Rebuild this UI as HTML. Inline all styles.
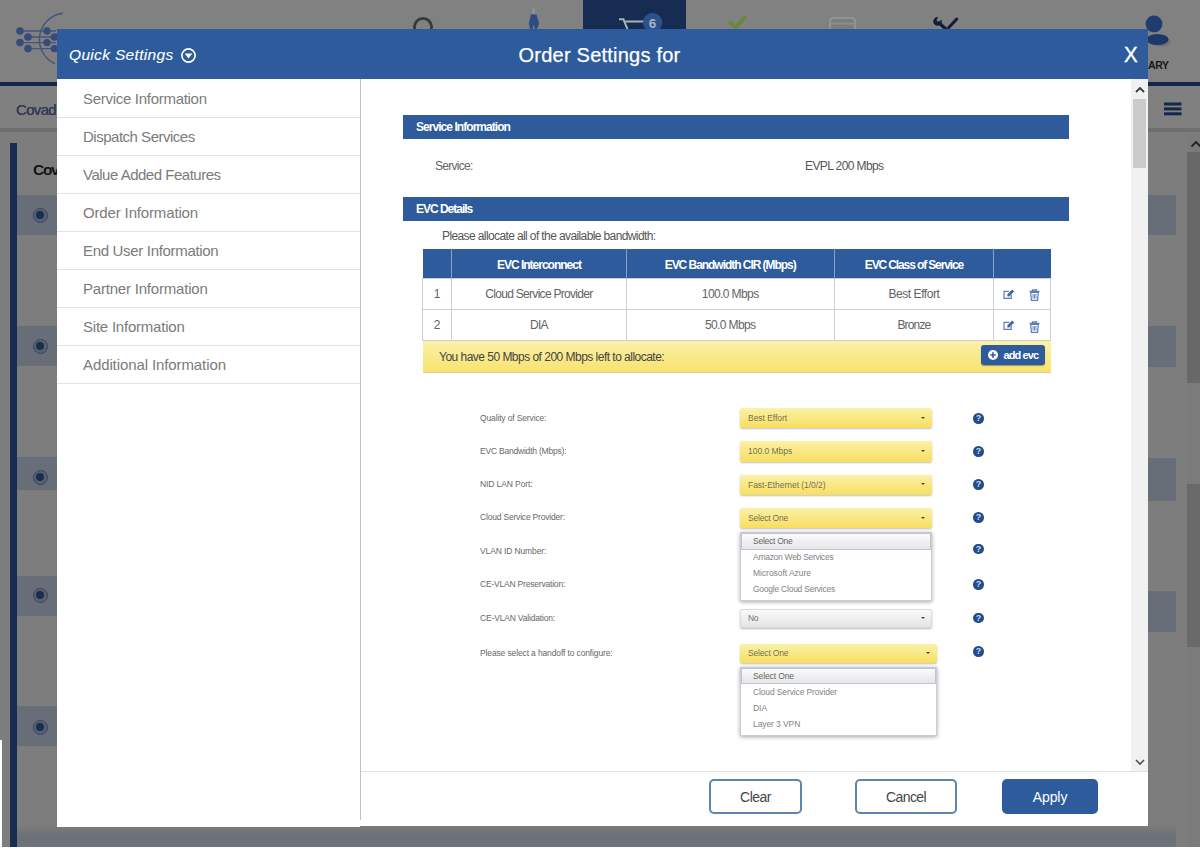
<!DOCTYPE html>
<html lang="en">
<head>
<meta charset="utf-8">
<title>Order Settings</title>
<style>
*{box-sizing:border-box;margin:0;padding:0}
html,body{width:1200px;height:849px;overflow:hidden}
body{position:relative;background:#6f6f6f;font-family:"Liberation Sans",sans-serif;color:#444}
.abs{position:absolute}
/* ---------- background page (dimmed) ---------- */
#bg-top{left:0;top:0;width:1200px;height:82px;background:#818181}
#bg-line{left:0;top:82px;width:1200px;height:4.6px;background:#13264a}
#bg-tabs{left:0;top:86px;width:1200px;height:42px;background:#808080}
#bg-tabs-b{left:0;top:128px;width:1200px;height:4px;background:#6f6f6f}
#bg-body{left:0;top:132px;width:1200px;height:717px;background:#7d7d7d}
#bg-active{left:582.700px;top:0;width:103.500px;height:82px;background:#162c52}
#bg-bar{left:10.3px;top:143px;width:6.9px;height:704px;background:#182c52}
.band{left:17px;width:1159px;background:#676e78}
.radio{width:15px;height:15px;border-radius:50%;border:1.5px solid #3a465d;background:#566174}
.radio i{position:absolute;left:2px;top:2px;width:8px;height:8px;border-radius:50%;background:#1b2c4d}
/* ---------- modal ---------- */
#modal{left:57px;top:29px;width:1091px;height:796.5px;background:#fff}
#mhead{left:0;top:0;width:1091px;height:50px;background:#2d5b9b;color:#fff}
#side{left:0;top:51px;width:303px;height:747px;background:#fff}
#vsep{left:303px;top:50px;width:1px;height:741px;background:#c2c2c2}
.mi{left:0;width:303px;height:38px;border-bottom:1px solid #e3e3e3;font-size:15px;color:#7b7b7b;line-height:38px;padding-left:26px;white-space:nowrap}

#mhead .qs{left:12px;top:15px;-webkit-text-stroke:.1px #fff;font-size:15.500px;font-style:italic;line-height:22px;white-space:nowrap;}
#mhead .ttl{left:0;width:1085px;top:13px;-webkit-text-stroke:.25px #fff;text-align:center;font-size:20px;line-height:26px;white-space:nowrap}
#mhead .x{left:1066.5px;top:13.5px;-webkit-text-stroke:.4px #fff;font-size:22px;line-height:24px;transform:scaleX(.93);transform-origin:0 0}
/* content */
.sbar{left:346px;width:666px;height:24px;background:#2d5b9b;color:#fff;font-weight:bold;font-size:12px;line-height:24px;padding-left:13px;}
.t{white-space:nowrap;line-height:1}
table.evc{border-collapse:collapse;table-layout:fixed;font-size:12px;color:#636363}
table.evc th{background:#2d5b9b;color:#fff;font-weight:bold;height:29.400px;padding-top:3px;border-right:1px solid #8aa2c6;}
table.evc td{height:31px;border:1px solid #cfcfcf;text-align:center;background:#fff}
#alloc{left:366px;top:312px;width:628px;height:32px;background:linear-gradient(#faf1aa,#f9e26e);border-bottom:1.500px solid #dccf92;font-size:12px;color:#444;line-height:32px;padding-left:16px;}
#addevc{left:924px;top:316px;width:64px;height:20px;background:#2d5b9b;border-radius:3px;color:#fff;font-weight:bold;font-size:11px;line-height:20px;box-shadow:0 1px 1px rgba(0,0,0,.35)}
.lbl{left:423px;font-size:8.5px;color:#686868;white-space:nowrap}
.sel{left:683px;width:192px;height:20px;border-radius:2px;font-size:8.5px;color:rgba(60,60,60,.74);line-height:20px;padding-left:8px;white-space:nowrap}
.sel.y{background:linear-gradient(#fbf1a8,#f7de60);box-shadow:0 1px 2px rgba(0,0,0,.25)}
.sel.g{background:linear-gradient(#fafafa,#e4e4e4);box-shadow:0 1px 2px rgba(0,0,0,.28);border:1px solid #dcdcdc;line-height:17px !important;padding-left:7px}
.sel.g b{right:6.500px;top:7.500px}
.sel b{position:absolute;right:7.500px;top:8.500px;width:0;height:0;border-left:2.500px solid transparent;border-right:2.500px solid transparent;border-top:2.600px solid #444}
.dd{left:683px;width:192px;background:#fff;border:1px solid #cdcdcd;box-shadow:0 1px 4px rgba(0,0,0,.35);font-size:8.5px;color:#838383}
.dd div{height:16px;line-height:16px;padding-left:12px;white-space:nowrap}
.dd div.hl{background:linear-gradient(#fbfbfb,#e6e6e6);border:1px solid #b9c6d9;color:#666;height:16.500px;line-height:14.500px;padding-left:11px}
.help{left:916.100px;width:10.600px;height:10.600px;border-radius:50%;background:#234c8b;color:#c4dcf8;font-size:9px;font-weight:bold;text-align:center;line-height:10.600px}
#fline{left:304px;top:742px;width:787px;height:1px;background:#e1e1e1}
.btn{top:750px;height:35px;border-radius:5px;font-size:14px;text-align:center;line-height:33px;}
.btn.o{border:2px solid #5b86ae;color:#444;background:#fff}
.btn.f{background:#2d5b9b;color:#fff;line-height:37px}
#sb{left:1074px;top:50px;width:17px;height:692px;background:#f1f1f1}
#sb .th{left:2px;top:20px;width:13px;height:69px;background:#cbcbcb}
</style>
</head>
<body>
<div id="bg-top" class="abs"></div>
<div id="bg-line" class="abs"></div>
<div id="bg-tabs" class="abs"></div>
<div id="bg-tabs-b" class="abs"></div>
<div id="bg-body" class="abs"></div>
<div id="bg-bar" class="abs"></div>
<div id="bg-active" class="abs"></div>
<!-- dimmed nav icons -->
<svg class="abs" style="left:0;top:0" width="1200" height="140" viewBox="0 0 1200 140">
  <!-- logo -->
  <g stroke="#44567b" stroke-width="1.400" fill="none">
    <path d="M20 31H56M28 37H56M20 42.6H56M28 48.6H56"/>
    <path d="M63 13.300A26.500 26.500 0 0 0 55 63.800" stroke-width="1.500"/>
  </g>
  <g fill="#364a7b">
    <circle cx="20" cy="31" r="3.800"/><circle cx="28" cy="37" r="3.800"/><circle cx="20" cy="42.6" r="3.800"/><circle cx="28" cy="48.6" r="3.800"/>
    <circle cx="47" cy="31" r="3.700"/><circle cx="47" cy="42.6" r="3.700"/><circle cx="54.4" cy="37" r="3.700"/><circle cx="54.4" cy="48.6" r="3.700"/>
  </g>
  <!-- search -->
  <circle cx="423" cy="27" r="8.6" fill="none" stroke="#383838" stroke-width="2.8"/>
  <!-- compass -->
  <path d="M531 14.500h5.500l2.700 9l-2.500 6h-1.800l-1.200-5l-1.200 5h-2.300l-1.400-6z" fill="#2d4c80"/>
  <path d="M532.300 7.500h2.600v6h-2.600z" fill="#8b929d"/>
  <!-- cart -->
  <g stroke="#aab0ba" stroke-width="2" fill="none"><path d="M619 19.300h4.500l4.200 10.500M625.500 21.600h20"/></g>
  <circle cx="652.600" cy="22.600" r="9.600" fill="#2c528c"/>
  <text x="652.600" y="27.500" font-size="13.500" font-weight="bold" font-family="Liberation Sans, sans-serif" fill="#a9b3c3" text-anchor="middle">6</text>
  <!-- check -->
  <path d="M729.500 21.500l6.300 6.300L745.800 16.200" stroke="#6a873c" stroke-width="3.800" fill="none"/>
  <!-- card -->
  <path d="M830 31v-9.500q0-3.500 3.500-3.500h18q3.500 0 3.500 3.500v9.500" fill="#7c7c7c" stroke="#939393" stroke-width="2.200"/><path d="M831 23.500h23" stroke="#8e8e8e" stroke-width="2"/>
  <!-- tools -->
  <g stroke="#121c39" fill="none" stroke-linecap="round"><path d="M939 23l8 7" stroke-width="3.400"/><path d="M956.800 19l-8 8.500" stroke-width="3"/></g>
  <path d="M941.500 19.800a4.300 4.300 0 1 1-3.400-2.700l-1.600 3.400l2 1.800z" fill="#121c39"/>
  <!-- user -->
  <ellipse cx="1160" cy="42" rx="11" ry="4.5" fill="#737373"/>
  <circle cx="1154" cy="24" r="8.4" fill="#1e3c70"/>
  <ellipse cx="1157.5" cy="39.5" rx="11" ry="5.6" fill="#1c386a"/>
  <!-- hamburger -->
  <g fill="#14284c"><rect x="1164" y="102.5" width="17.5" height="3"/><rect x="1164" y="107.4" width="17.5" height="3"/><rect x="1164" y="112.3" width="17.5" height="3"/></g>
</svg>
<div class="abs t" style="left:1139.2px;top:59.5px;font-size:10.5px;font-weight:bold;color:#161616">M<span id="t_ary" style="letter-spacing:-0.36px">ARY</span></div>
<div class="abs t" style="left:16px;top:101.6px;font-size:15px;color:#2f384e;text-shadow:0 0 .5px #2f384e"><span id="t_cv" style="letter-spacing:-0.67px">Covad</span></div>
<div class="abs t" style="left:33px;top:161.500px;font-size:15.500px;font-weight:bold;color:#141414;letter-spacing:-1.300px">Covad</div>
<!-- highlighted rows: left and right stubs -->
<div class="abs band" style="left:17px;width:40px;top:195px;height:40px"></div>
<div class="abs band" style="left:17px;width:40px;top:326px;height:40px"></div>
<div class="abs band" style="left:17px;width:40px;top:457px;height:33px"></div>
<div class="abs band" style="left:17px;width:40px;top:576px;height:40px"></div>
<div class="abs band" style="left:17px;width:40px;top:706px;height:40px"></div>
<div class="abs band" style="left:1148px;width:28px;top:195px;height:40px"></div>
<div class="abs band" style="left:1148px;width:28px;top:326px;height:41px"></div>
<div class="abs band" style="left:1148px;width:28px;top:458px;height:43px"></div>
<div class="abs band" style="left:1148px;width:28px;top:591px;height:41px"></div>
<div class="abs" style="left:17px;width:1159px;top:826px;height:21px;background:linear-gradient(#7b7b7b 0,#727478 30%,#6b7077 55%,#70757d 100%)"></div>
<div class="abs radio" style="left:33px;top:208px"><i></i></div>
<div class="abs radio" style="left:33px;top:339px"><i></i></div>
<div class="abs radio" style="left:33px;top:470px"><i></i></div>
<div class="abs radio" style="left:33px;top:588px"><i></i></div>
<div class="abs radio" style="left:33px;top:720px"><i></i></div>
<div class="abs" style="left:0;top:740px;width:2.400px;height:109px;background:#fff"></div>
<!-- background page scrollbar -->
<div class="abs" style="left:1187px;top:132px;width:13px;height:717px;background:#7b7b7b"></div>
<div class="abs" style="left:1187px;top:152px;width:13px;height:231px;background:#686868"></div>
<div class="abs" style="left:1187px;top:484px;width:13px;height:163px;background:#696969"></div>
<svg class="abs" style="left:1190px;top:138.5px" width="12" height="10" viewBox="0 0 12 10"><path d="M1.5 7.5L6 3l4.500 4.500" stroke="#222" stroke-width="1.8" fill="none"/></svg>

<div id="modal" class="abs">
  <div id="mhead" class="abs">
    <div class="abs qs"><span id="t_qs" style="letter-spacing:0.33px">Quick Settings</span></div>
    <svg class="abs" style="left:123px;top:18px" width="17" height="17" viewBox="0 0 17 17"><circle cx="8.5" cy="8.5" r="6.6" fill="none" stroke="#fff" stroke-width="1.6"/><path d="M4.7 6.6h7.6L8.5 11.6z" fill="#fff"/></svg>
    <div class="abs ttl"><span id="t_ttl" style="letter-spacing:0.23px">Order Settings for</span></div>
    <div class="abs x">X</div>
  </div>
  <div id="side" class="abs">
    <div class="abs mi" style="top:0"><span id="t_m1" style="letter-spacing:-0.29px">Service Information</span></div>
    <div class="abs mi" style="top:38px"><span id="t_m2" style="letter-spacing:-0.49px">Dispatch Services</span></div>
    <div class="abs mi" style="top:76px"><span id="t_m3" style="letter-spacing:-0.49px">Value Added Features</span></div>
    <div class="abs mi" style="top:114px"><span id="t_m4" style="letter-spacing:-0.15px">Order Information</span></div>
    <div class="abs mi" style="top:152px"><span id="t_m5" style="letter-spacing:-0.32px">End User Information</span></div>
    <div class="abs mi" style="top:190px"><span id="t_m6" style="letter-spacing:-0.20px">Partner Information</span></div>
    <div class="abs mi" style="top:228px"><span id="t_m7" style="letter-spacing:-0.22px">Site Information</span></div>
    <div class="abs mi" style="top:266px"><span id="t_m8" style="letter-spacing:-0.10px">Additional Information</span></div>
  </div>
  <div id="vsep" class="abs"></div>

  <div class="abs sbar" style="top:86.400px"><span id="t_sb1" style="letter-spacing:-0.95px">Service Information</span></div>
  <div class="abs t" style="left:378px;top:131px;font-size:12px;color:#666;"><span id="t_svc" style="letter-spacing:-0.71px">Service:</span></div>
  <div class="abs t" style="left:748px;top:131px;font-size:12px;color:#555;"><span id="t_evpl" style="letter-spacing:-0.60px">EVPL 200 Mbps</span></div>
  <div class="abs sbar" style="top:168.400px"><span id="t_sb2" style="letter-spacing:-1.01px">EVC Details</span></div>
  <div class="abs t" style="left:385px;top:201px;font-size:12px;color:#555;"><span id="t_alloc0" style="letter-spacing:-0.61px">Please allocate all of the available bandwidth:</span></div>

  <table class="abs evc" style="left:365.200px;top:220px;width:628px">
    <colgroup><col style="width:29px"><col style="width:174.500px"><col style="width:208px"><col style="width:159.500px"><col style="width:57px"></colgroup>
    <tr><th></th><th><span id="t_th1" style="letter-spacing:-1.00px">EVC Interconnect</span></th><th><span id="t_th2" style="letter-spacing:-1.04px">EVC Bandwidth CIR (Mbps)</span></th><th><span id="t_th3" style="letter-spacing:-1.12px">EVC Class of Service</span></th><th style="border-right:0"></th></tr>
    <tr><td>1</td><td><span id="t_r1a" style="letter-spacing:-0.70px">Cloud Service Provider</span></td><td><span id="t_r1b" style="letter-spacing:-0.60px">100.0 Mbps</span></td><td><span id="t_r1c" style="letter-spacing:-0.44px">Best Effort</span></td><td></td></tr>
    <tr><td>2</td><td><span id="t_r2a" style="letter-spacing:-0.77px">DIA</span></td><td><span id="t_r2b" style="letter-spacing:-0.64px">50.0 Mbps</span></td><td><span id="t_r2c" style="letter-spacing:-0.84px">Bronze</span></td><td></td></tr>
  </table>
  <svg class="abs" style="left:946px;top:259.5px" width="12" height="11" viewBox="0 0 12 11"><path d="M8.2 5.6V9.4H1V2.4H6.2" fill="none" stroke="#5b7fb3" stroke-width="1.2"/><path d="M4.6 7.6L4.2 5.6L9.2 0.6L11.2 2.600L6.2 7.600Z" fill="#3f669f"/></svg><svg class="abs" style="left:971.5px;top:260px" width="11" height="12" viewBox="0 0 11 12"><path d="M0.5 2.500H10.500M3.500 2.300V0.900H7.500V2.300" fill="none" stroke="#5b7fb3" stroke-width="1.3"/><path d="M1.700 3.400H9.300L8.600 11.300H2.400Z" fill="none" stroke="#5b7fb3" stroke-width="1.2"/><path d="M4 5V9.600M5.500 5V9.600M7 5V9.600" stroke="#5b7fb3" stroke-width="0.9"/></svg><svg class="abs" style="left:946px;top:291px" width="12" height="11" viewBox="0 0 12 11"><path d="M8.2 5.6V9.4H1V2.4H6.2" fill="none" stroke="#5b7fb3" stroke-width="1.2"/><path d="M4.6 7.6L4.2 5.6L9.2 0.6L11.2 2.600L6.2 7.600Z" fill="#3f669f"/></svg><svg class="abs" style="left:971.5px;top:291.5px" width="11" height="12" viewBox="0 0 11 12"><path d="M0.5 2.500H10.500M3.500 2.300V0.900H7.500V2.300" fill="none" stroke="#5b7fb3" stroke-width="1.3"/><path d="M1.700 3.400H9.300L8.600 11.300H2.400Z" fill="none" stroke="#5b7fb3" stroke-width="1.2"/><path d="M4 5V9.600M5.500 5V9.600M7 5V9.600" stroke="#5b7fb3" stroke-width="0.9"/></svg>
  <div id="alloc" class="abs"><span id="t_alloc" style="letter-spacing:-0.52px">You have 50 Mbps of 200 Mbps left to allocate:</span></div>
  <div id="addevc" class="abs"><span style="position:absolute;left:22.5px"><span id="t_add" style="letter-spacing:-0.90px">add evc</span></span>
    <svg class="abs" style="left:7.300px;top:5.300px" width="10" height="10" viewBox="0 0 10 10"><circle cx="5" cy="5" r="5" fill="#fff"/><path d="M5 2.3v5.4M2.3 5h5.4" stroke="#2d5b9b" stroke-width="1.6"/></svg>
  </div>

  <div class="abs lbl t" style="top:385px"><span id="t_l1" style="letter-spacing:-0.14px">Quality of Service:</span></div>
  <div class="abs lbl t" style="top:418px"><span id="t_l2" style="letter-spacing:-0.21px">EVC Bandwidth (Mbps):</span></div>
  <div class="abs lbl t" style="top:451px"><span id="t_l3" style="letter-spacing:-0.10px">NID LAN Port:</span></div>
  <div class="abs lbl t" style="top:484px"><span id="t_l4" style="letter-spacing:-0.19px">Cloud Service Provider:</span></div>
  <div class="abs lbl t" style="top:518px"><span id="t_l5" style="letter-spacing:-0.12px">VLAN ID Number:</span></div>
  <div class="abs lbl t" style="top:551px"><span id="t_l6" style="letter-spacing:-0.20px">CE-VLAN Preservation:</span></div>
  <div class="abs lbl t" style="top:585px"><span id="t_l7" style="letter-spacing:-0.17px">CE-VLAN Validation:</span></div>
  <div class="abs lbl t" style="top:620px"><span id="t_l8" style="letter-spacing:-0.13px">Please select a handoff to configure:</span></div>

  <div class="abs sel y" style="top:379px"><span id="t_s1" style="letter-spacing:-0.03px">Best Effort</span><b></b></div>
  <div class="abs sel y" style="top:412.200px;height:20.400px"><span id="t_s2" style="letter-spacing:-0.02px">100.0 Mbps</span><b></b></div>
  <div class="abs sel y" style="top:445.600px;height:20.500px"><span id="t_s3" style="letter-spacing:-0.04px">Fast-Ethernet (1/0/2)</span><b></b></div>
  <div class="abs sel y" style="top:479px"><span id="t_s4" style="letter-spacing:-0.21px">Select One</span><b></b></div>
  <div class="abs sel g" style="top:579.5px;height:19.5px;line-height:19px"><span id="t_s5" style="letter-spacing:-0.44px">No</span><b></b></div>
  <div class="abs sel y" style="top:614.5px;width:197px;height:19.5px;line-height:19px"><span id="t_s6" style="letter-spacing:-0.17px">Select One</span><b></b></div>

  <div class="abs dd" style="top:503px;height:68.5px">
    <div class="hl"><span id="t_d1" style="letter-spacing:-0.26px">Select One</span></div><div style="margin-top:-1px"><span id="t_d2" style="letter-spacing:-0.28px">Amazon Web Services</span></div><div><span id="t_d3" style="letter-spacing:-0.04px">Microsoft Azure</span></div><div><span id="t_d4" style="letter-spacing:-0.24px">Google Cloud Services</span></div>
  </div>
  <div class="abs dd" style="top:638px;width:197px;height:68.5px">
    <div class="hl" style="height:16px;line-height:14px"><span id="t_e1" style="letter-spacing:-0.11px">Select One</span></div><div><span id="t_e2" style="letter-spacing:-0.13px">Cloud Service Provider</span></div><div><span id="t_e3" style="letter-spacing:-0.06px">DIA</span></div><div><span id="t_e4" style="letter-spacing:-0.09px">Layer 3 VPN</span></div>
  </div>

  <div class="abs help" style="top:384.2px">?</div>
  <div class="abs help" style="top:417.0px">?</div>
  <div class="abs help" style="top:450.1px">?</div>
  <div class="abs help" style="top:483.1px">?</div>
  <div class="abs help" style="top:514.5px">?</div>
  <div class="abs help" style="top:550.0px">?</div>
  <div class="abs help" style="top:583.8px">?</div>
  <div class="abs help" style="top:617.4px">?</div>

  <div id="sb" class="abs"><div class="abs th"></div><svg class="abs" style="left:3px;top:6px" width="12" height="10" viewBox="0 0 12 10"><path d="M2 7L6 3l4 4" stroke="#3a3a3a" stroke-width="1.8" fill="none"/></svg><svg class="abs" style="left:3px;top:678px" width="12" height="10" viewBox="0 0 12 10"><path d="M2 3l4 4l4-4" stroke="#505050" stroke-width="1.600" fill="none"/></svg></div>
  <div id="fline" class="abs"></div>
  <div class="abs btn o" style="left:652px;width:93px"><span id="t_b1" style="letter-spacing:-0.53px">Clear</span></div>
  <div class="abs btn o" style="left:798px;width:102px"><span id="t_b2" style="letter-spacing:-0.62px">Cancel</span></div>
  <div class="abs btn f" style="left:945px;width:96px"><span id="t_b3" style="letter-spacing:-0.07px">Apply</span></div>
</div>
<div class="abs" style="left:0;top:847px;width:1200px;height:2px;background:#fff"></div>
</body>
</html>
